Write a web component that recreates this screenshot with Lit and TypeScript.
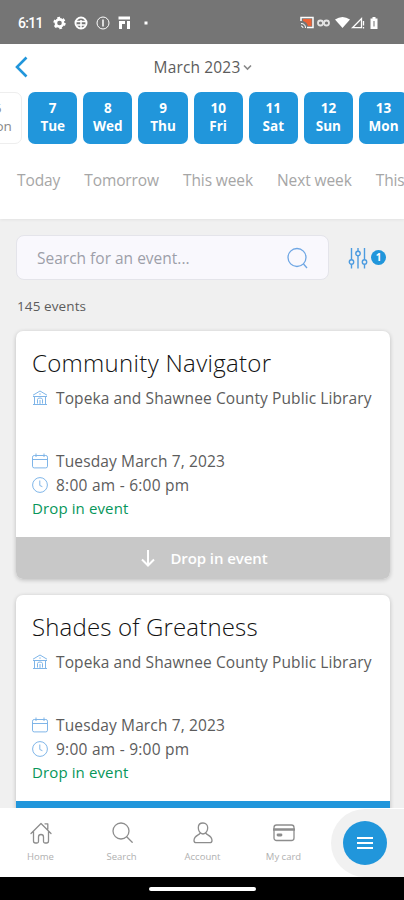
import { LitElement, html, css, svg } from "lit";
import { customElement, property } from "lit/decorators.js";
import { classMap } from "lit/directives/class-map.js";

const museum = svg`<path d="M1 5.200 8 1l7 4.200M1 6.500h14M2.500 6.500V14M13.500 6.500V14M1 14.500h14M5.500 13.500V9.500q0-1.500 2.500-1.500t2.500 1.500v4M8 10v4M8 3.300v1.500"/>`;
const calendar = svg`<path d="M2.200 2.500h11.600q1.700 0 1.700 1.700v9q0 1.700-1.700 1.700H2.200q-1.700 0-1.700-1.700v-9q0-1.700 1.700-1.700zM.5 6.500h15M4 .5v3.500M12 .5v3.500"/>`;
const clock = svg`<circle cx="8" cy="8" r="7.400"/><path d="M7.800 3.500v5l2.600 1.200"/>`;

@customElement("event-card")
class EventCard extends LitElement {
  @property() name = "";
  @property() time = "";
  @property({ type: Boolean }) active = false;

  static styles = css`
    :host {
      display: flex;
      flex-direction: column;
      flex: none;
      height: 248px;
      border-radius: 7px;
      overflow: hidden;
      background: #fff;
      box-shadow: 0 1px 4px rgba(0, 0, 0, 0.22);
      color: #5c5c5c;
    }
    .body {
      flex: 1;
      padding: 15px 16px 0;
    }
    .title {
      font-size: 24px;
      font-weight: 300;
      line-height: 34px;
      color: #111;
      letter-spacing: 0.31px;
    }
    .active-title {
      letter-spacing: 0.16px;
    }
    .line {
      display: flex;
      align-items: center;
      gap: 8px;
      height: 24px;
      font-size: 15.500px;
      white-space: nowrap;
    }
    .place {
      margin: 6px 0 39px;
      letter-spacing: 0.1px;
    }
    .date {
      letter-spacing: 0.13px;
    }
    .time {
      letter-spacing: 0.25px;
    }
    svg {
      width: 16px;
      height: 16px;
      fill: none;
      stroke: #7fb5e8;
      stroke-width: 1;
    }
    .kind {
      color: #07965a;
      font-size: 15px;
      line-height: 22px;
      font-weight: 500;
      letter-spacing: 0.12px;
    }
    .action {
      display: flex;
      align-items: center;
      justify-content: center;
      gap: 15px;
      height: 42.500px;
      padding-left: 3px;
      background: #c8c8c8;
      color: #fff;
      font-size: 15px;
      font-weight: 600;
      letter-spacing: -0.08px;
    }
    .action.active {
      background: #2196db;
    }
    .action svg {
      width: 14px;
      height: 18px;
      stroke: #fff;
      stroke-width: 2;
    }
  `;

  render() {
    return html`
      <div class="body">
        <div class=${classMap({ title: true, "active-title": this.active })}>${this.name}</div>
        <div class="line place"><svg viewBox="0 0 16 16">${museum}</svg>Topeka and Shawnee County Public Library</div>
        <div class="line date"><svg viewBox="0 0 16 16">${calendar}</svg>Tuesday March 7, 2023</div>
        <div class="line time"><svg viewBox="0 0 16 16">${clock}</svg>${this.time}</div>
        <div class="kind">Drop in event</div>
      </div>
      <div class=${classMap({ action: true, active: this.active })}>
        <svg viewBox="0 0 14 18"><path d="M7 1v15M1 10.500l6 6 6-6" /></svg><span>Drop in event</span>
      </div>
    `;
  }
}

@customElement("app-root")
class AppRoot extends LitElement {
  static styles = css`
    :host {
      display: flex;
      flex-direction: column;
      width: 404px;
      height: 900px;
      overflow: hidden;
      background: #f0f0f0;
      font-family: "Open Sans", "Noto Sans", sans-serif;
      color: #5c5c5c;
    }
    svg {
      display: block;
      fill: none;
      flex: none;
    }
    .status {
      display: flex;
      align-items: center;
      flex: none;
      height: 44px;
      padding: 2px 26px 0 18px;
      box-sizing: border-box;
      background: #757575;
      color: #fff;
      font: 500 14px Roboto, sans-serif;
      justify-content: space-between;
    }
    .status div {
      display: flex;
      align-items: center;
    }
    .clock {
      width: 34px;
      letter-spacing: -0.7px;
    }
    .header {
      flex: none;
      height: 175px;
      background: #fff;
      box-shadow: 0 1px 3px rgba(0, 0, 0, 0.06);
      z-index: 1;
    }
    .top {
      display: grid;
      grid-template-columns: 60px 1fr 60px;
      align-items: center;
      height: 48px;
      padding: 0 14px;
      box-sizing: border-box;
    }
    .top > svg {
      margin-top: -2px;
    }
    .month {
      display: flex;
      justify-content: center;
      align-items: center;
      gap: 3px;
      padding: 0 0 2px 2px;
      font-size: 15.500px;
      letter-spacing: 0.15px;
    }
    .days {
      display: flex;
      gap: 6px;
      margin-left: -27px;
    }
    .day {
      display: flex;
      flex-direction: column;
      justify-content: center;
      flex: none;
      width: 49.150px;
      height: 52px;
      border-radius: 7px;
      background: #2196db;
      color: #fff;
      text-align: center;
      font-size: 13.500px;
      font-weight: 700;
      line-height: 18.500px;
      padding-bottom: 2px;
      box-sizing: border-box;
    }
    .day.past {
      background: #fff;
      color: #888;
      border: 1px solid #eee;
      font-weight: 500;
    }
    .ranges {
      display: flex;
      gap: 24px;
      margin: 24px 0 0 17px;
      font-size: 15.500px;
      line-height: 24px;
      letter-spacing: -0.1px;
      color: #a6a6a6;
      white-space: nowrap;
    }
    .content {
      display: flex;
      flex-direction: column;
      flex: 1;
      min-height: 0;
      overflow: hidden;
      padding: 16px 14px 0 16px;
    }
    .find {
      display: flex;
      flex: none;
      align-items: center;
      height: 45px;
    }
    .field {
      display: flex;
      align-items: center;
      justify-content: space-between;
      width: 313px;
      height: 45px;
      padding: 0 20px;
      box-sizing: border-box;
      border: 1px solid #e4e4ea;
      border-radius: 8px;
      background: #f9f8fd;
      color: #9d9fa9;
      font-size: 15.500px;
    }
    .badge {
      width: 15px;
      height: 15px;
      margin-left: 3px;
      border-radius: 50%;
      background: #2196db;
      color: #fff;
      font-size: 10px;
      font-weight: 700;
      line-height: 15px;
      text-align: center;
    }
    .filter {
      margin-left: 19px;
    }
    .count {
      flex: none;
      margin: 16px 0 15px 1px;
      font-size: 13.500px;
      letter-spacing: 0.1px;
      line-height: 20px;
    }
    .cards {
      display: flex;
      flex-direction: column;
      gap: 16px;
    }
    .nav {
      display: flex;
      flex: none;
      height: 69px;
      background: #fff;
      z-index: 1;
      overflow: hidden;
    }
    .item {
      display: flex;
      flex-direction: column;
      align-items: center;
      width: 81px;
      padding-top: 14px;
      font-size: 9.500px;
      line-height: 14px;
      color: #b0b0b0;
      gap: 6px;
    }
    .item svg {
      stroke: #8d8d8d;
      stroke-width: 1.300;
    }
    .halo {
      display: flex;
      align-items: center;
      flex: 1;
      margin: 1px 0 0 7px;
      padding-left: 12px;
      border-radius: 35px 0 0 35px;
      background: #f1f1f1;
    }
    .menu {
      display: flex;
      align-items: center;
      justify-content: center;
      width: 44px;
      height: 44px;
      border-radius: 50%;
      background: #2196db;
    }
    .gesture {
      display: flex;
      flex: none;
      justify-content: center;
      align-items: center;
      height: 23px;
      background: #000;
    }
    .pill {
      width: 107px;
      height: 4px;
      border-radius: 2px;
      background: #fff;
    }
  `;

  days = [
    ["6", "Mon"], ["7", "Tue"], ["8", "Wed"], ["9", "Thu"],
    ["10", "Fri"], ["11", "Sat"], ["12", "Sun"], ["13", "Mon"],
  ];

  nav = [
    { label: "Home", icon: svg`<path d="M1 11.500 11 1.500l10 10M3.500 9.500V19q0 2 2 2h1.500q1.500 0 1.500-1.500V15q0-2.500 2.500-2.500t2.500 2.500v4.500q0 1.500 1.500 1.500h1.500q2 0 2-2V9.500M15 1.800h2.800v5.500"/>` },
    { label: "Search", icon: svg`<circle cx="10" cy="9" r="8"/><path d="m15.700 14.700 5.500 5.500"/>` },
    { label: "Account", icon: svg`<path d="M11 1C8 1 6.300 3 6.300 5.800S8 12 11 12s4.700-3.400 4.700-6.200S14 1 11 1zM8 11.300C7.500 13 2 13.500 2 18.500 2 20 3 20.700 4.300 20.700h13.400c1.300 0 2.300-.7 2.300-2.200 0-5-5.500-5.500-6-7.200"/>` },
    { label: "My card", icon: svg`<rect x="1" y="3" width="20" height="15.500" rx="2.500"/><path d="M1 7.500h20" stroke-width="2.600"/><path d="M5 13h3" stroke-width="2.800"/>` },
  ];

  render() {
    return html`
      <div class="status">
        <div>
          <span class="clock">6:11</span>
          <svg width="106" height="16" viewBox="0 0 106 16" stroke="#fff">
            <circle cx="7.500" cy="8" r="3.600" stroke-width="2.600" />
            <circle cx="7.500" cy="8" r="5.200" stroke-width="2" stroke-dasharray="2.700 2.745" />
            <circle cx="29" cy="8" r="5.500" stroke-width="2" />
            <path d="M24 6.500h10M25 10h8M29 5v8" stroke-width="1.500" />
            <circle cx="51" cy="8" r="6" /><path d="M51 4.500v7" stroke-width="1.500" />
            <path d="M66.500 3h11.500M67 7.500h6M68.500 7v7M76.500 6v8" stroke-width="3" />
            <rect x="92.500" y="6.500" width="3" height="3" fill="#fff" stroke="none" />
          </svg>
        </div>
        <svg width="78" height="16" viewBox="0 0 78 16" stroke="#fff">
          <path d="M1 6V2.500h12v10H7" stroke-width="1.500" /><path d="M3 4h8.500v7H8Q7 7 3 6z" fill="#ee6235" stroke="none" />
          <path d="M1 8.500q4.500 0 4.500 4.500M1 11q2 0 2 2" />
          <g stroke="#e4e4e4"><circle cx="20.500" cy="8" r="2.500" stroke-width="1.800" /><circle cx="26.500" cy="8" r="2.500" stroke-width="1.800" /></g>
          <path d="M35 4.500Q42.500-.5 50 4.500L42.500 13z" fill="#fff" stroke="none" />
          <path d="M52.500 12.700 61.500 3.500v9.200zM63.500 6v4.500M63.500 12v1.500" stroke-width="1.300" />
          <path d="M70.500 3.500h2V2h3v1.500h2V14h-7z" fill="#fff" stroke="none" /><path d="M74 6v2.500M74 8.500v3" stroke="#999" stroke-width="1.400" />
        </svg>
      </div>

      <div class="header">
        <div class="top">
          <svg width="14" height="22" viewBox="0 0 14 22" stroke="#2196db" stroke-width="2.600"><path d="M12.500 1.500 3 11l9.500 9.500" /></svg>
          <div class="month">March 2023 <svg width="9" height="7" viewBox="0 0 9 7" stroke="#888" stroke-width="1.600"><path d="m1 1.500 3.500 3.500L8 1.500" /></svg></div>
        </div>
        <div class="days">
          ${this.days.map(([n, d], i) => html`<div class=${classMap({ day: true, past: i === 0 })}><span>${n}</span><span>${d}</span></div>`)}
        </div>
        <div class="ranges">
          <span>Today</span><span>Tomorrow</span><span>This week</span><span>Next week</span><span>This month</span>
        </div>
      </div>

      <div class="content">
        <div class="find">
          <div class="field">
            <span>Search for an event...</span>
            <svg width="21" height="22" viewBox="0 0 21 22" stroke="#6ea6e4" stroke-width="1.300"><circle cx="10" cy="10.500" r="9" /><path d="m16.500 17 3.500 4" /></svg>
          </div>
          <svg class="filter" width="20" height="22" viewBox="0 0 20 22" stroke="#4b9be0" stroke-width="1.400">
            <path d="M3.500 1v11.500M3.500 17.500v4M10 1v3M10 9v12.500M16.500 1v11.500M16.500 17.500v4" />
            <circle cx="3.500" cy="15" r="2.200" /><circle cx="10" cy="6.500" r="2.200" /><circle cx="16.500" cy="15" r="2.200" />
          </svg>
          <div class="badge">1</div>
        </div>
        <div class="count">145 events</div>
        <div class="cards">
          <event-card name="Community Navigator" time="8:00 am - 6:00 pm"></event-card>
          <event-card name="Shades of Greatness" time="9:00 am - 9:00 pm" active></event-card>
        </div>
      </div>

      <div class="nav">
        ${this.nav.map((n) => html`<div class="item"><svg width="22" height="22" viewBox="0 0 22 22" stroke-linecap="round" stroke-linejoin="round">${n.icon}</svg><span>${n.label}</span></div>`)}
        <div class="halo">
          <div class="menu"><svg width="16" height="14" viewBox="0 0 16 14" stroke="#fff" stroke-width="2.200"><path d="M0 2h16M0 7h16M0 12h16" /></svg></div>
        </div>
      </div>
      <div class="gesture"><div class="pill"></div></div>
    `;
  }
}
